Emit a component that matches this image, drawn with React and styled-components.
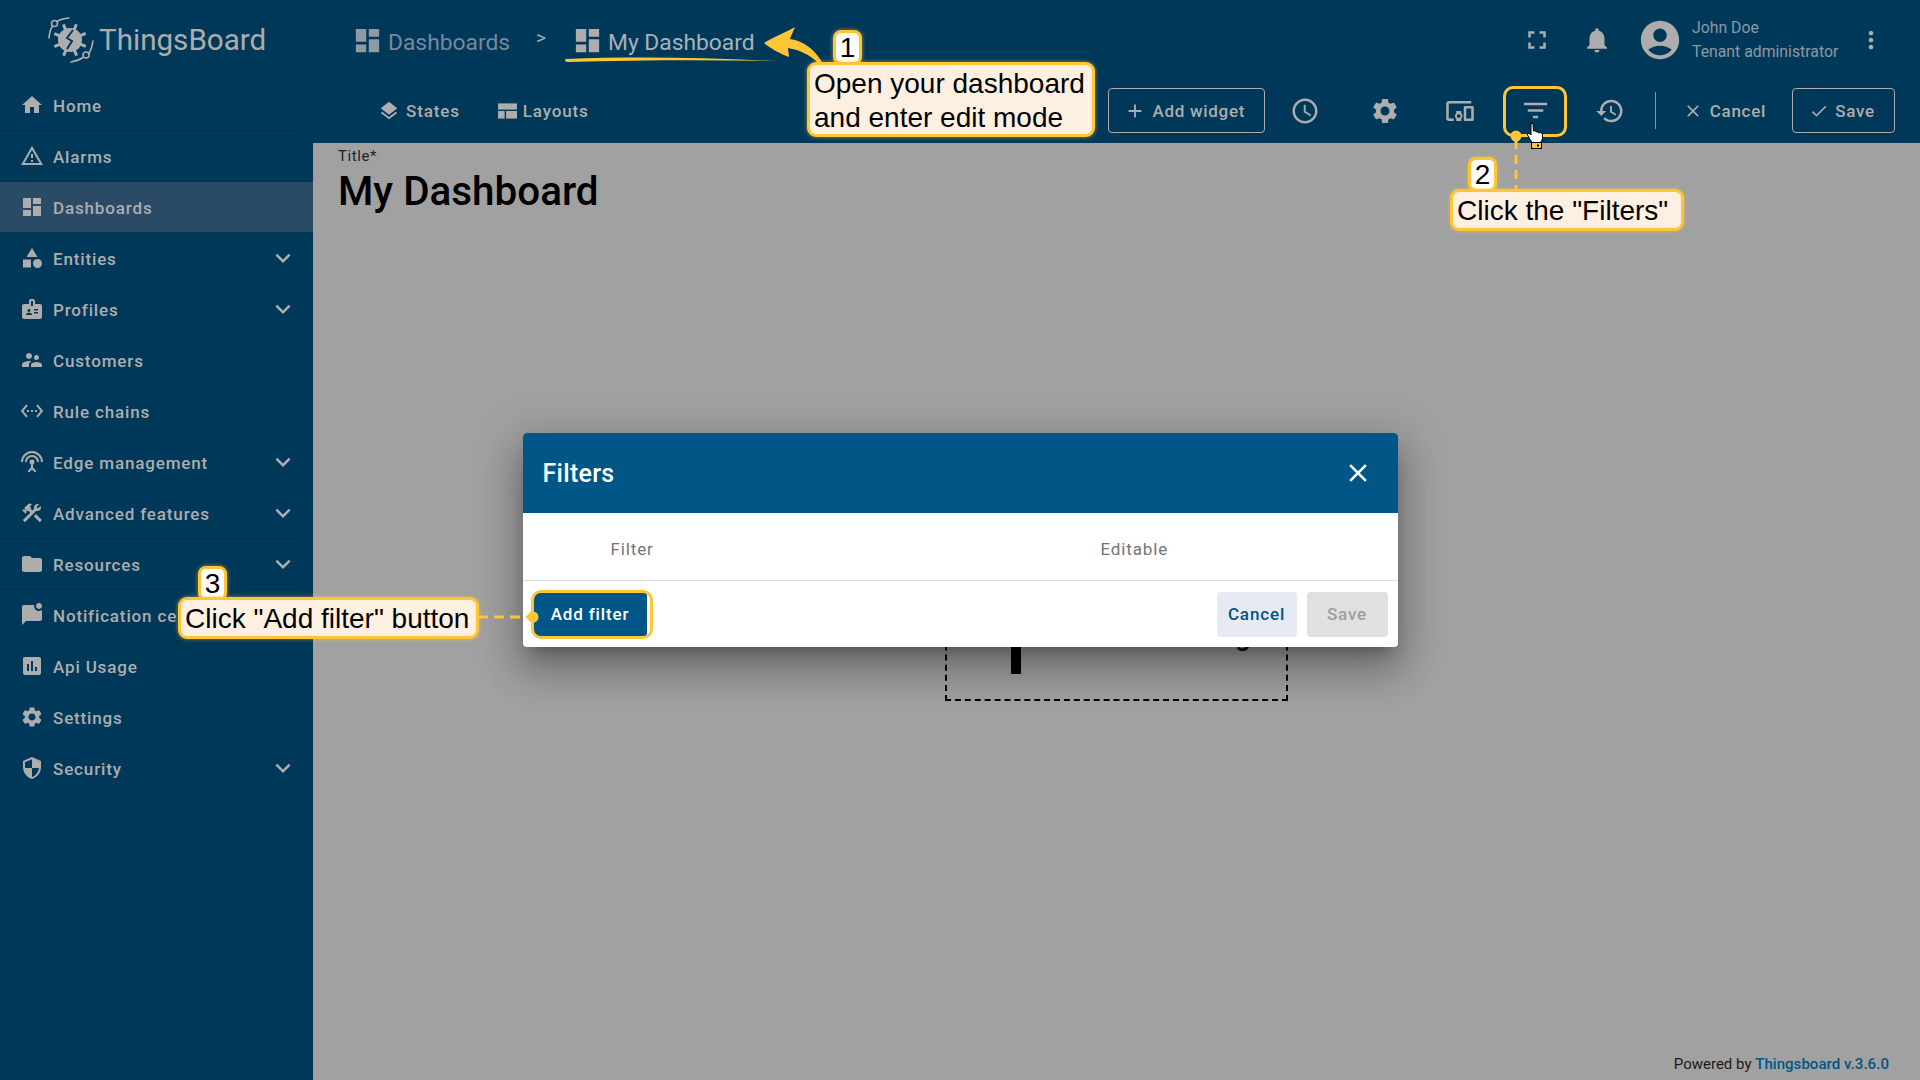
import React from 'react'
import styled, { createGlobalStyle } from 'styled-components'
import {
  MdHome, MdOutlineWarningAmber, MdDashboard, MdCategory, MdBadge, MdSupervisorAccount,
  MdSettingsEthernet, MdSettingsInputAntenna, MdConstruction, MdFolder, MdMarkChatUnread,
  MdInsertChart, MdSettings, MdSecurity, MdExpandMore, MdFullscreen, MdNotifications,
  MdAccountCircle, MdMoreVert, MdLayers, MdAccessTime, MdDevicesOther, MdFilterList,
  MdHistory, MdClose, MdCheck, MdAdd,
} from 'react-icons/md'

const GlobalStyle = createGlobalStyle`
  html, body { margin: 0; padding: 0; width: 1920px; height: 1080px; overflow: hidden; }
  body { font-family: Roboto, "Liberation Sans", sans-serif; }
  * { box-sizing: border-box; }
`

const YELLOW = '#fec536'
const NAVY = '#00385a'
const GREY = '#adadad'
const BLUE = '#005686'

const Page = styled.div`
  position: relative;
  display: flex;
  width: 1920px;
  height: 1080px;
  background: #a1a1a1;
`

const Sidebar = styled.nav`
  width: 313px;
  flex: none;
  background: ${NAVY};
  color: ${GREY};
`

const LogoRow = styled.div`
  height: 80px;
  display: flex;
  align-items: center;
  padding-left: 48px;
  gap: 5px;
  font-size: 29.6px;
  border-bottom: 1px solid #00324f;
`

const NavRow = styled.div`
  height: 51px;
  display: flex;
  align-items: center;
  padding: 0 15px 0 20px;
  gap: 9px;
  font-size: 17px;
  font-weight: 500;
  letter-spacing: 0.85px;
  border-bottom: 1px solid #00324f;
  background: ${(props) => (props.$active ? '#2a4a66' : 'transparent')};
  span { flex: 1; white-space: nowrap; margin-top: 1px; }
`

const Main = styled.div`
  flex: 1;
  display: flex;
  flex-direction: column;
  min-width: 0;
`

const TopBar = styled.header`
  height: 143px;
  flex: none;
  background: ${NAVY};
  color: ${GREY};
  border-left: 1px solid #00324f;
`

const TopRow = styled.div`
  height: 80px;
  display: flex;
  align-items: center;
  padding: 0 33px 0 38px;
`

const Crumb = styled.div`
  display: flex;
  align-items: center;
  gap: 5px;
  font-size: 22.8px;
  color: ${(props) => (props.$current ? '#a9b1b8' : '#75899a')};
  margin-top: 4px;
  svg { color: ${(props) => (props.$current ? '#adadad' : '#8f9aa4')}; margin-top: -3px; }
`

const CrumbSep = styled.div`
  width: 62px;
  text-align: center;
  font-size: 19px;
  color: #a9b1b8;
  margin-top: -5px;
`

const TopIcons = styled.div`
  margin-left: auto;
  display: flex;
  align-items: center;
`

const TopIcon = styled.div`
  display: flex;
  width: ${(props) => props.$width || '60px'};
  justify-content: center;
`

const UserText = styled.div`
  width: 162px;
  margin-left: -1px;
  font-size: 15.8px;
  line-height: 24px;
  color: #8d99a2;
  margin-top: -1px;
`

const Toolbar = styled.div`
  height: 63px;
  display: flex;
  align-items: center;
  padding: 0 25px 0 64px;
  margin-top: -1px;
`

const ToolTab = styled.div`
  display: flex;
  align-items: center;
  gap: 6px;
  font-size: 17px;
  font-weight: 500;
  letter-spacing: 0.85px;
  margin-right: 38px;
`

const OutlineButton = styled.div`
  height: 45px;
  width: ${(props) => props.$width};
  margin-left: ${(props) => props.$left || '0'};
  display: flex;
  align-items: center;
  justify-content: center;
  gap: 6px;
  padding-right: 3px;
  font-size: 17px;
  font-weight: 500;
  letter-spacing: 0.7px;
  border: 1px solid ${GREY};
  border-radius: 4px;
`

const ToolIcon = styled.div`
  width: 75px;
  display: flex;
  justify-content: center;
  margin-left: ${(props) => props.$left || '0'};
`

const ToolDivider = styled.div`
  width: 1px;
  height: 37px;
  background: #7f95a5;
  margin: 0 27px 0 7px;
`

const PlainButton = styled.div`
  display: flex;
  align-items: center;
  gap: 7px;
  font-size: 17px;
  font-weight: 500;
  letter-spacing: 0.7px;
  margin-right: 26px;
`

const Content = styled.main`
  position: relative;
  flex: 1;
  display: flex;
  align-items: center;
  justify-content: center;
`

const TitleBlock = styled.div`
  position: absolute;
  left: 25px;
  top: 6px;
  color: #000;
`

const TitleLabel = styled.div`
  font-size: 15px;
  letter-spacing: 0.6px;
  line-height: 14px;
  color: #222;
`

const TitleText = styled.div`
  font-size: 40.4px;
  font-weight: 500;
  line-height: 48px;
  margin-top: 5px;
`

const EmptyWidget = styled.div`
  width: 343px;
  height: 178px;
  margin-top: 1px;
  border: 2px dashed #000;
  display: flex;
  align-items: flex-start;
  color: #000;
`

const EmptyMark = styled.div`
  width: 10px;
  height: 59px;
  margin: 90px 0 0 64px;
  background: #000;
`

const EmptyText = styled.div`
  font-size: 28px;
  font-weight: 500;
  margin: 94px 0 0 55px;
  white-space: nowrap;
`

const PoweredBy = styled.div`
  position: absolute;
  right: 31px;
  bottom: 7px;
  font-size: 15px;
  color: #1a1a1a;
  b { color: ${BLUE}; font-weight: 500; letter-spacing: 0.05px; }
`

const Overlay = styled.div`
  position: absolute;
  inset: 0;
  display: flex;
  align-items: center;
  justify-content: center;
`

const Modal = styled.section`
  width: 875px;
  height: 214px;
  background: #fff;
  border-radius: 4px;
  overflow: hidden;
  box-shadow: 0 11px 15px -7px rgba(0,0,0,.28), 0 24px 38px 3px rgba(0,0,0,.2), 0 9px 46px 8px rgba(0,0,0,.16);
`

const ModalHeader = styled.div`
  height: 80px;
  background: ${BLUE};
  color: #fff;
  display: flex;
  align-items: center;
  justify-content: space-between;
  padding: 0 25px 0 20px;
  font-size: 25px;
  letter-spacing: 0.3px;
  font-weight: 500;
`

const TableHead = styled.div`
  height: 68px;
  display: grid;
  grid-template-columns: 490px 1fr;
  align-items: center;
  padding: 4px 0 0 88px;
  font-size: 17px;
  letter-spacing: 0.85px;
  color: #757575;
  border-bottom: 1px solid #e0e0e0;
`

const ModalFooter = styled.div`
  height: 66px;
  display: flex;
  align-items: center;
  padding: 0 10px 0 11px;
  gap: 10px;
`

const DialogButton = styled.div`
  height: 45px;
  width: ${(props) => props.$width};
  display: flex;
  align-items: center;
  justify-content: center;
  border-radius: 4px;
  font-size: 17px;
  font-weight: 500;
  letter-spacing: 0.85px;
  color: ${(props) => props.$color};
  background: ${(props) => props.$bg};
  margin-right: ${(props) => (props.$push ? 'auto' : '0')};
`

const Highlight = styled.div`
  position: absolute;
  left: ${(props) => props.$x}px;
  top: ${(props) => props.$y}px;
  width: ${(props) => props.$w}px;
  height: ${(props) => props.$h}px;
  border: 3px solid ${YELLOW};
  border-radius: 10px;
`

const Callout = styled.div`
  position: absolute;
  left: ${(props) => props.$x}px;
  top: ${(props) => props.$y}px;
  width: ${(props) => props.$w}px;
  height: ${(props) => props.$h}px;
  padding: 2px 0 0 4px;
  display: flex;
  align-items: center;
  background: #fdf0e1;
  border: 3px solid ${YELLOW};
  border-radius: 9px;
  font-family: "Liberation Sans", Arial, sans-serif;
  font-size: 28px;
  line-height: 34px;
  color: #000;
  white-space: pre;
  box-shadow: 0 0 4px rgba(254,197,54,.6);
`

const StepBadge = styled.div`
  position: absolute;
  left: ${(props) => props.$x}px;
  top: ${(props) => props.$y}px;
  width: 29px;
  height: 35px;
  padding-top: 1px;
  display: flex;
  align-items: center;
  justify-content: center;
  background: #fff;
  border: 3px solid ${YELLOW};
  border-radius: 8px;
  font-family: "Liberation Sans", Arial, sans-serif;
  font-size: 28px;
  color: #000;
  box-shadow: 0 0 4px rgba(254,197,54,.6);
`

const AnnotationSvg = styled.svg`
  position: absolute;
  left: 0;
  top: 0;
  pointer-events: none;
`

const HandSvg = styled.svg`
  position: absolute;
  left: 1526px;
  top: 122px;
`

const DashIcon = ({ size }) => <MdDashboard size={size} />

const LayoutsIcon = () => (
  <svg width="19" height="16" viewBox="0 0 20 16" fill={GREY}>
    <rect x="0" y="0" width="20" height="6.5" />
    <rect x="0" y="8" width="7" height="8" />
    <rect x="8.5" y="8" width="11.5" height="8" />
  </svg>
)

const Logo = () => (
  <svg width="46" height="46" viewBox="0 0 46 46" fill="none">
    <g stroke={GREY} strokeWidth="1.6" strokeLinecap="round">
      <circle cx="6.5" cy="6.5" r="3" />
      <circle cx="38" cy="38" r="3" />
      <path d="M9 4.5C12 2.5 16 1.5 21 1M4.5 9C2.5 12 1.5 16 1 21M41 36.5C43 33 44.5 28 45 24M35 40.5C32 42.5 28 44 23 45" />
    </g>
    <g fill={GREY}>
      <circle cx="22" cy="23" r="12" />
      {[0, 45, 90, 135, 180, 225, 270, 315].map((a) => (
        <rect key={a} x="20.5" y="6" width="3" height="7" transform={`rotate(${a + 22} 22 23)`} />
      ))}
    </g>
    <path d="M25 13L19 21L24 24L19 32" stroke={NAVY} strokeWidth="2" />
  </svg>
)

const navItems = [
  { label: 'Home', icon: MdHome },
  { label: 'Alarms', icon: MdOutlineWarningAmber },
  { label: 'Dashboards', icon: MdDashboard, active: true },
  { label: 'Entities', icon: MdCategory, more: true },
  { label: 'Profiles', icon: MdBadge, more: true },
  { label: 'Customers', icon: MdSupervisorAccount },
  { label: 'Rule chains', icon: MdSettingsEthernet },
  { label: 'Edge management', icon: MdSettingsInputAntenna, more: true },
  { label: 'Advanced features', icon: MdConstruction, more: true },
  { label: 'Resources', icon: MdFolder, more: true },
  { label: 'Notification center', icon: MdMarkChatUnread },
  { label: 'Api Usage', icon: MdInsertChart },
  { label: 'Settings', icon: MdSettings },
  { label: 'Security', icon: MdSecurity, more: true },
]

export default function App() {
  return (
    <Page>
      <GlobalStyle />
      <Sidebar>
        <LogoRow><Logo />ThingsBoard</LogoRow>
        {navItems.map((item) => (
          <NavRow key={item.label} $active={item.active}>
            <item.icon size={24} />
            <span>{item.label}</span>
            {item.more && <MdExpandMore size={30} />}
          </NavRow>
        ))}
      </Sidebar>

      <Main>
        <TopBar>
          <TopRow>
            <Crumb><DashIcon size={31} />Dashboards</Crumb>
            <CrumbSep>&gt;</CrumbSep>
            <Crumb $current><DashIcon size={31} />My Dashboard</Crumb>
            <TopIcons>
              <TopIcon><MdFullscreen size={30} /></TopIcon>
              <TopIcon><MdNotifications size={30} /></TopIcon>
              <TopIcon $width="66px"><MdAccountCircle size={46} /></TopIcon>
              <UserText>John Doe<br />Tenant administrator</UserText>
              <TopIcon $width="33px"><MdMoreVert size={28} /></TopIcon>
            </TopIcons>
          </TopRow>
          <Toolbar>
            <ToolTab><MdLayers size={22} />States</ToolTab>
            <ToolTab><LayoutsIcon />Layouts</ToolTab>
            <OutlineButton $width="157px" $left="auto"><MdAdd size={22} />Add widget</OutlineButton>
            <ToolIcon $left="3px"><MdAccessTime size={30} /></ToolIcon>
            <ToolIcon $left="5px"><MdSettings size={30} /></ToolIcon>
            <ToolIcon><MdDevicesOther size={30} /></ToolIcon>
            <ToolIcon><MdFilterList size={31} /></ToolIcon>
            <ToolIcon><MdHistory size={30} /></ToolIcon>
            <ToolDivider />
            <PlainButton><MdClose size={20} />Cancel</PlainButton>
            <OutlineButton $width="103px"><MdCheck size={20} />Save</OutlineButton>
          </Toolbar>
        </TopBar>
        <Content>
          <TitleBlock>
            <TitleLabel>Title*</TitleLabel>
            <TitleText>My Dashboard</TitleText>
          </TitleBlock>
          <EmptyWidget>
            <EmptyMark />
            <EmptyText>Add new widget</EmptyText>
          </EmptyWidget>
          <PoweredBy>Powered by <b>Thingsboard v.3.6.0</b></PoweredBy>
        </Content>
      </Main>

      <Overlay>
        <Modal>
          <ModalHeader>Filters<MdClose size={30} /></ModalHeader>
          <TableHead><div>Filter</div><div>Editable</div></TableHead>
          <ModalFooter>
            <DialogButton $width="113px" $bg={BLUE} $color="#fff" $push>Add filter</DialogButton>
            <DialogButton $width="80px" $bg="#e6ebf3" $color={BLUE}>Cancel</DialogButton>
            <DialogButton $width="81px" $bg="#e0e0e0" $color="#9e9e9e">Save</DialogButton>
          </ModalFooter>
        </Modal>
      </Overlay>

      <Highlight $x={1503} $y={86} $w={64} $h={51} />
      <Highlight $x={531} $y={590} $w={122} $h={49} />

      <AnnotationSvg width="1920" height="1080" viewBox="0 0 1920 1080">
        <path d="M566 59C640 56 710 58 777 61C710 60 640 60 568 62C565 62 564 60 566 59Z" fill={YELLOW} />
        <path d="M764 43C772 38 786 32 795 27C793 32 791 36 790 39C804 41 815 50 822 62L817 62C810 55 800 50 788 48C788 51 789 54 789 57C781 54 771 49 764 43Z" fill={YELLOW} />
        <line x1="1516" y1="140" x2="1516" y2="189" stroke={YELLOW} strokeWidth="3" strokeDasharray="9 6" />
        <circle cx="1516" cy="136" r="5.5" fill={YELLOW} />
        <line x1="478" y1="617" x2="530" y2="617" stroke={YELLOW} strokeWidth="3" strokeDasharray="10 6" />
        <circle cx="533" cy="617" r="5.5" fill={YELLOW} />
      </AnnotationSvg>

      <HandSvg width="18" height="27" viewBox="0 0 18 27">
        <path d="M5 1.5L7 1.5L7.5 9L9.5 8.5L10 10L12 9.5L12.5 11L14.5 10.5L16.5 12L16.5 17L14.5 20.5L6 20.5L1.5 13L1.5 11.5L3.5 11.5L5 13Z" fill="#fff" stroke="#000" strokeWidth="1" />
        <rect x="5.5" y="20.5" width="10" height="6" fill={YELLOW} stroke="#000" strokeWidth="1" />
        <rect x="11" y="22.5" width="2" height="2" fill="#000" />
      </HandSvg>

      <StepBadge $x={833} $y={30}>1</StepBadge>
      <Callout $x={807} $y={62} $w={288} $h={75}>{'Open your dashboard\nand enter edit mode'}</Callout>
      <StepBadge $x={1468} $y={157}>2</StepBadge>
      <Callout $x={1450} $y={189} $w={234} $h={42}>Click the "Filters"</Callout>
      <StepBadge $x={198} $y={566}>3</StepBadge>
      <Callout $x={178} $y={597} $w={301} $h={42}>Click "Add filter" button</Callout>
    </Page>
  )
}
